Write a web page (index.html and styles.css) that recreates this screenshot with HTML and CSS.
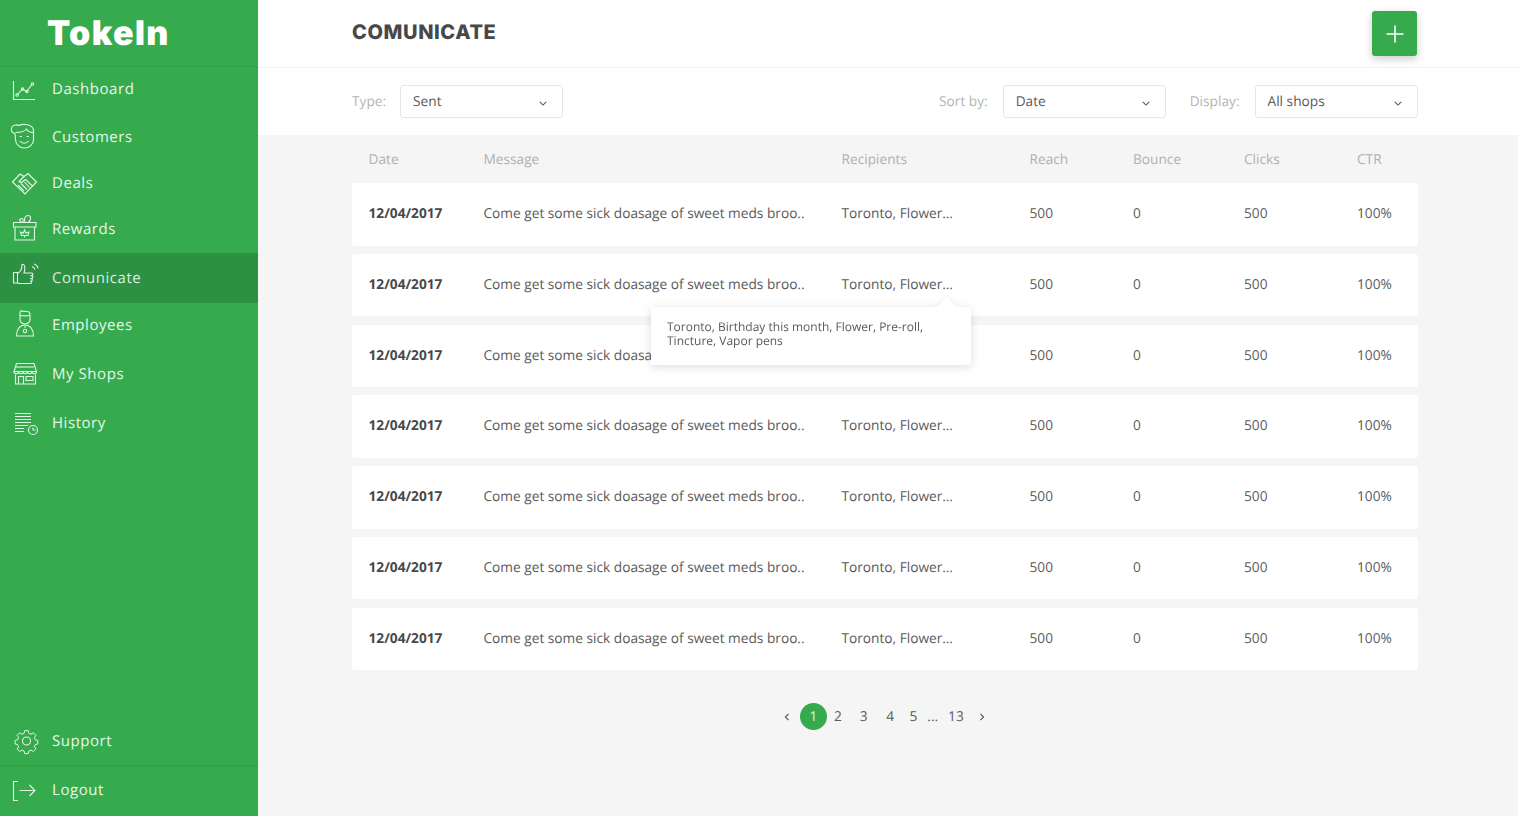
FILE: index.html

```html
<!DOCTYPE html>
<html lang="en">
<head>
  <meta charset="UTF-8" />
  <meta name="viewport" content="width=device-width, initial-scale=1.0"/>
  <title>TokeIn - Comunicate</title>
  <link rel="stylesheet" href="styles.css">
</head>
<body>
  <aside class="sidebar">
    <div class="logo">TokeIn</div>
    <nav class="nav">
      <a class="nav-item">
        <svg class="nav-icon" viewBox="0 0 30 30"><path d="M3.500 7v18.500H25"/><path d="M7.500 20.500l5-5.500 4 2.500 5.500-7"/><circle cx="7" cy="21" r="1.200"/><circle cx="12.500" cy="15" r="1.200"/><circle cx="17" cy="17.500" r="1.200"/><circle cx="22.500" cy="10" r="1.200"/></svg>
        Dashboard
      </a>
      <a class="nav-item">
        <svg class="nav-icon" viewBox="0 0 30 30"><path d="M5 11.500C1.500 11 0.500 8 2 5 3.500 2.500 7 2.500 9 3.500 13 1.500 23 2 23.500 8.500v9c0 5-4.500 8.500-9 8.500s-9-3.500-9-8.500z"/><path d="M5.500 10.500c5 0 9-1 11-3.500 1 2 3.500 3.500 7 3.500"/><path d="M9.500 14.500h2.500M16.500 14.500h2.500"/><path d="M10 19c2 3 6.500 3 8.500 0"/></svg>
        Customers
      </a>
      <a class="nav-item">
        <svg class="nav-icon" viewBox="0 0 30 30"><path d="M2.500 14L10 6l4 2.500L18 5.500 26.500 14 15 26z"/><path d="M14 8.500l-5 5c1.500 1.500 3 1 4.500-.5l2-1.500 7.500 7"/><path d="M8 17l6 6M11 15.500l6 6M14.500 14l5 5.500"/></svg>
        Deals
      </a>
      <a class="nav-item">
        <svg class="nav-icon" viewBox="0 0 30 30"><path d="M3.500 8.500h22.500v4.500H3.500zM5 13v13h19.500V13"/><path d="M12 8.500c-3-.5-3-4 -.5-4 2 0 2 2.500 1 4zM15 8.500c-1.500-3 0-7 3-7 3.500 0 3.500 5 0 7"/><path d="M14.500 16l1.500 3 3-1-1 3.500H11.500l-1-3.500 3 1zM14.500 21.500v2"/></svg>
        Rewards
      </a>
      <a class="nav-item active">
        <svg class="nav-icon" viewBox="0 0 30 30"><path d="M3.500 9.500h4v10.500h-4z"/><path d="M7.500 10.500c3-1.500 4.500-5 4.500-9 2.500-1 4 3 2 8.500h7.500c1.800 0 1.800 2.700 0 2.700h-1.500 1.500c1.800 0 1.800 2.800 0 2.800h-1.500 1c1.800 0 1.500 2.700 0 2.700h-1 .5c1.500 0 1.500 2.300 0 2.300H7.500"/><path d="M22 3.500c1.500.5 2.500 1.500 3 3M24 1c2 .5 3.500 2 4 4.500"/></svg>
        Comunicate
      </a>
      <a class="nav-item">
        <svg class="nav-icon" viewBox="0 0 30 30"><path d="M10 10V3c0-1.500 1-2.500 2-2 1 .5 3 .5 5 .5 2.500 0 3 1.500 3 3V10c0 2-2.500 4-5 4s-5-2-5-4z"/><path d="M10 5.500c3 .5 7 .5 10 0"/><path d="M6.500 26c0-7 3.500-11 8.500-11s8.500 4 8.500 11z"/><circle cx="15" cy="21" r="1.700"/><path d="M14 17h2"/></svg>
        Employees
      </a>
      <a class="nav-item">
        <svg class="nav-icon" viewBox="0 0 30 30"><path d="M6.500 4.500h17.500l2.500 8H4z"/><path d="M4 12.500c0 3 4.500 3 4.500 0 0 3 4.500 3 4.500 0 0 3 4.500 3 4.500 0 0 3 4.500 3 4.500 0 0 3 4.500 3 4.500 0"/><path d="M6 8h18"/><path d="M5.500 15.500v9.500h20v-9.500"/><path d="M8.500 25v-7.500h5V25M16 17.500h7v4h-7z"/></svg>
        My Shops
      </a>
      <a class="nav-item">
        <svg class="nav-icon" viewBox="0 0 30 30"><path d="M5 5.500h16M5 8.500h16M5 11.500h16M5 14.500h16M5 17.500h13M5 20.500h9M5 23.500h9"/><circle cx="23" cy="22" r="4.500"/><path d="M23 19.500v2.500h2.500"/></svg>
        History
      </a>
    </nav>
    <div class="nav-bottom">
      <a class="nav-item support">
        <svg class="nav-icon" viewBox="0 0 30 30"><circle cx="16.500" cy="15" r="4"/><path d="M14.500 3.500h4l.7 3 2.300 1 2.600-1.600 2.800 2.800-1.600 2.600 1 2.300 2.700.7v4l-2.700.7-1 2.300 1.600 2.600-2.800 2.800-2.600-1.600-2.300 1-.7 2.900h-4l-.7-2.900-2.300-1-2.600 1.600-2.800-2.800 1.600-2.600-1-2.300-2.900-.7v-4l2.900-.7 1-2.300-1.600-2.600 2.800-2.800 2.600 1.600 2.300-1z" transform="translate(1.650 1.500) scale(.9)"/></svg>
        Support
      </a>
      <a class="nav-item logout">
        <svg class="nav-icon" viewBox="0 0 30 30"><path d="M8 6.500H3.500v19H8"/><path d="M9.500 15.500h15.500M19.500 10l5.500 5.500-5.500 5.500"/></svg>
        Logout
      </a>
    </div>
  </aside>

  <main class="main">
    <header class="topbar">
      <h1 class="title">COMUNICATE</h1>
      <button class="add-btn">
        <svg viewBox="0 0 20 20"><path d="M10 1.500v17M1.500 10h17"/></svg>
      </button>
    </header>

    <div class="filters">
      <span class="filter-label type-label">Type:</span>
      <div class="select">Sent<svg class="chevron" viewBox="0 0 10 6"><path d="M1 1l4 4 4-4"/></svg></div>
      <span class="filter-label sort-label">Sort by:</span>
      <div class="select">Date<svg class="chevron" viewBox="0 0 10 6"><path d="M1 1l4 4 4-4"/></svg></div>
      <span class="filter-label display-label">Display:</span>
      <div class="select">All shops<svg class="chevron" viewBox="0 0 10 6"><path d="M1 1l4 4 4-4"/></svg></div>
    </div>

    <section class="content">
      <div class="columns head">
        <span>Date</span><span>Message</span><span>Recipients</span><span>Reach</span><span>Bounce</span><span>Clicks</span><span>CTR</span>
      </div>

      <div class="columns row">
        <b>12/04/2017</b><span>Come get some sick doasage of sweet meds broo..</span><span>Toronto, Flower…</span><span>500</span><span>0</span><span>500</span><span>100%</span>
      </div>
      <div class="columns row">
        <b>12/04/2017</b><span>Come get some sick doasage of sweet meds broo..</span>
        <span class="has-tip">Toronto, Flower…
          <div class="tooltip">Toronto, Birthday this month, Flower, Pre-roll, Tincture, Vapor pens</div>
        </span>
        <span>500</span><span>0</span><span>500</span><span>100%</span>
      </div>
      <div class="columns row">
        <b>12/04/2017</b><span class="under-tip">Come get some sick doasa</span><span></span><span>500</span><span>0</span><span>500</span><span>100%</span>
      </div>
      <div class="columns row">
        <b>12/04/2017</b><span>Come get some sick doasage of sweet meds broo..</span><span>Toronto, Flower…</span><span>500</span><span>0</span><span>500</span><span>100%</span>
      </div>
      <div class="columns row">
        <b>12/04/2017</b><span>Come get some sick doasage of sweet meds broo..</span><span>Toronto, Flower…</span><span>500</span><span>0</span><span>500</span><span>100%</span>
      </div>
      <div class="columns row">
        <b>12/04/2017</b><span>Come get some sick doasage of sweet meds broo..</span><span>Toronto, Flower…</span><span>500</span><span>0</span><span>500</span><span>100%</span>
      </div>
      <div class="columns row">
        <b>12/04/2017</b><span>Come get some sick doasage of sweet meds broo..</span><span>Toronto, Flower…</span><span>500</span><span>0</span><span>500</span><span>100%</span>
      </div>

      <div class="pager">
        <svg class="pager-arrow" viewBox="0 0 6 10"><path d="M5 1L1 5l4 4"/></svg>
        <span class="page current">1</span>
        <span class="page p2">2</span>
        <span class="page p3">3</span>
        <span class="page p4">4</span>
        <span class="page p5">5</span>
        <span class="page dots">...</span>
        <span class="page p13">13</span>
        <svg class="pager-arrow next" viewBox="0 0 6 10"><path d="M1 1l4 4-4 4"/></svg>
      </div>
    </section>
  </main>
</body>
</html>
```

FILE: styles.css

```css
html, body {
  margin: 0;
  height: 100%;
  overflow: hidden;
}
body {
  display: flex;
  font-family: "Open Sans", Arial, sans-serif;
  font-size: 13.7px;
  color: #5a5a5a;
  background-color: #fff;
  text-rendering: geometricPrecision;
}

/* sidebar */
.sidebar {
  width: 258px;
  flex: none;
  display: flex;
  flex-direction: column;
  background: #35ab4d;
  color: #fff;
}
.logo {
  height: 67px;
  box-sizing: border-box;
  padding-left: 47px;
  border-bottom: 1px solid #31a148;
  font-family: Inter, Arial, sans-serif;
  font-size: 34px;
  font-weight: 900;
  line-height: 68px;
  letter-spacing: 1.4px;
}
.nav {
  flex: 1;
  padding-top: 1px;
}
.nav-item {
  display: flex;
  align-items: center;
  height: 46px;
  box-sizing: border-box;
  padding-left: 10px;
  font-size: 15px;
  letter-spacing: 0.55px;
  color: #e9f6ec;
}
.nav .nav-item:nth-child(1) { height: 42px; margin-bottom: 4px; }
.nav .nav-item:nth-child(4) { margin-bottom: 1px; }
.nav-item.active { height: 50px; background: #2d9143; color: #dcefe0; }
.nav .nav-item:nth-child(6) { height: 44px; margin-bottom: 4px; }
.nav .nav-item:nth-child(8) { margin-top: 3px; }
.nav-icon {
  width: 30px;
  height: 30px;
  margin-right: 12px;
  flex: none;
  fill: none;
  stroke: #e4f4e8;
  stroke-width: 1.1;
}
.nav-bottom {
  display: flex;
  flex-direction: column;
}
.support { height: 48px; }
.logout {
  height: 51px;
  padding-bottom: 2px;
  border-top: 1px solid #2f9e46;
}

/* top of the page */
.main {
  flex: 1;
  min-width: 0;
  display: flex;
  flex-direction: column;
}
.topbar {
  height: 67px;
  flex: none;
  display: flex;
  align-items: flex-start;
  justify-content: space-between;
  padding: 0 101px 0 94px;
  border-bottom: 1px solid #f2f2f2;
}
.title {
  margin: 19px 0 0;
  font-family: Inter, Arial, sans-serif;
  font-size: 20px;
  font-weight: 800;
  line-height: 26px;
  letter-spacing: 0.6px;
  color: #484848;
}
.add-btn {
  width: 45px;
  height: 45px;
  margin-top: 11px;
  padding: 0;
  display: flex;
  align-items: center;
  justify-content: center;
  background: #35ab4d;
  border: 0;
  border-radius: 3px;
  box-shadow: 0 3px 8px rgba(0, 0, 0, 0.2);
}
.add-btn svg {
  width: 20px;
  height: 20px;
  fill: none;
  stroke: #fff;
  stroke-width: 1.6;
}

.filters {
  height: 67px;
  flex: none;
  display: flex;
  align-items: center;
  padding: 0 100.5px 0 94px;
}
.filter-label {
  margin-right: 15px;
  color: #b4b4b4;
}
.type-label { margin-right: 14px; }
.sort-label { margin-left: auto; }
.display-label { margin-left: 24px; }
.select {
  width: 163px;
  height: 33px;
  box-sizing: border-box;
  display: flex;
  align-items: center;
  justify-content: space-between;
  padding: 0 15px 0 12px;
  border: 1px solid #e6e6e6;
  border-radius: 3px;
}
.chevron {
  width: 8px;
  height: 5px;
  margin-top: 3px;
  fill: none;
  stroke: #555;
  stroke-width: 1.3;
}

/* table */
.content {
  flex: 1;
  padding: 0 100.5px 0 94px;
  background: #f5f5f5;
}
.columns {
  display: grid;
  grid-template-columns: 115px 358px 188px 103.5px 111px 113px 1fr;
  align-items: center;
  box-sizing: border-box;
  padding-left: 16.5px;
}
.head {
  height: 48px;
  color: #b0b0b0;
}
.row {
  height: 62.5px;
  padding-bottom: 1.5px;
  margin-bottom: 8.3px;
  background: #fff;
  border-radius: 3px;
}
.row b {
  font-weight: 700;
  color: #484848;
}
.has-tip {
  position: relative;
}
.tooltip {
  position: absolute;
  left: -190.5px;
  top: 31.75px;
  width: 320px;
  height: 58px;
  box-sizing: border-box;
  padding: 13px 16px;
  background: #fff;
  filter: drop-shadow(0 2px 5px rgba(0, 0, 0, 0.13));
  font-size: 12px;
  line-height: 14px;
  z-index: 2;
}
.tooltip::before {
  content: "";
  position: absolute;
  right: 14px;
  top: -9px;
  border-left: 10px solid transparent;
  border-right: 10px solid transparent;
  border-bottom: 9px solid #fff;
}

/* pagination */
.pager {
  display: flex;
  align-items: center;
  height: 27px;
  margin-top: 33px;
  padding-left: 432px;
}
.pager-arrow {
  width: 6px;
  height: 8px;
  fill: none;
  stroke: #555;
  stroke-width: 1.4;
}
.next { margin-left: 15px; }
.current {
  width: 27px;
  height: 27px;
  margin-left: 10px;
  border-radius: 50%;
  background: #35ab4d;
  color: #dff2e4;
  text-align: center;
  line-height: 27px;
}
.p2 { margin-left: 7px; }
.p3 { margin-left: 18px; }
.p4 { margin-left: 18.5px; }
.p5 { margin-left: 15.5px; }
.dots { margin-left: 10px; }
.p13 { margin-left: 10px; }
```
